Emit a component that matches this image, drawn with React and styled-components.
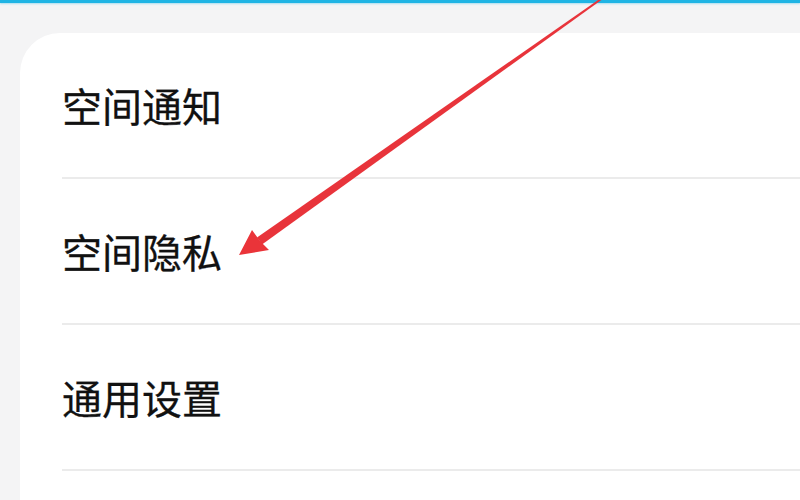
import React from 'react'
import styled, { createGlobalStyle } from 'styled-components';

const GlobalStyle = createGlobalStyle`
  html, body {
    margin: 0;
    padding: 0;
    background: #f4f4f5;
  }
  body {
    font-family: "Noto Sans CJK SC", "Noto Sans", sans-serif;
  }
`;

const Page = styled.div`
  position: relative;
  width: 800px;
  height: 500px;
  overflow: hidden;
  background: #f4f4f5;
`;

const TopBar = styled.div`
  height: 3px;
  background: #1fb4e4;
  box-shadow: 0 1px 2px rgba(31, 180, 228, 0.35);
`;

const Card = styled.div`
  margin: 30px 0 0 20px;
  height: 600px;
  background: #ffffff;
  border-top-left-radius: 40px;
`;

const Item = styled.div`
  margin-left: 42px;
  height: 144px;
  display: flex;
  align-items: center;
  border-bottom: 2px solid #ebebeb;
`;

const Label = styled.span`
  font-size: 40px;
  line-height: 1;
  color: #111111;
  -webkit-text-stroke: 0.3px #111111;
`;

const Overlay = styled.svg`
  position: absolute;
  left: 0;
  top: 0;
  pointer-events: none;
`;

const items = ['空间通知', '空间隐私', '通用设置'];

function Arrow() {
  return (
    <Overlay width="800" height="500" viewBox="0 0 800 500">
      <polygon
        points="262,244.5 604.6,-2.3 603.4,-3.7 257,237.5"
        fill="#e8343b"
      />
      <polygon points="239,255 252,230 260,241 269,250" fill="#ea3439" />
    </Overlay>
  );
}

export default function App() {
  return (
    <>
      <GlobalStyle />
      <Page>
        <TopBar />
        <Card>
          {items.map((t) => (
            <Item key={t}>
              <Label>{t}</Label>
            </Item>
          ))}
        </Card>
        <Arrow />
      </Page>
    </>
  );
}
